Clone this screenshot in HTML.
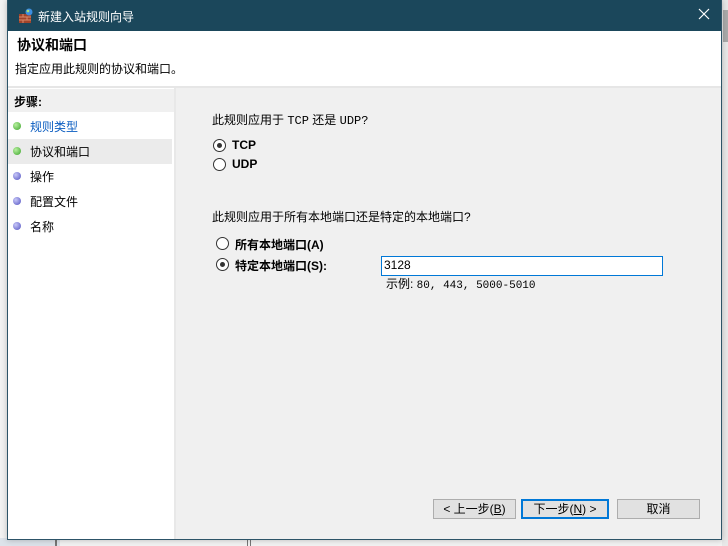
<!DOCTYPE html>
<html><head><meta charset="utf-8"><style>
*{margin:0;padding:0;box-sizing:border-box}
body{width:728px;height:546px;overflow:hidden;background:#f3f3f3;position:relative;font-family:"Liberation Sans","Noto Sans CJK SC",sans-serif;font-size:12px;color:#000}
.a{position:absolute}
.win{left:7px;top:0;width:715px;height:540px;background:#fff;border:1px solid #2d5468;border-top:none;box-shadow:0 0 6px rgba(0,0,0,.25)}
.title{left:0;top:0;width:713px;height:31px;background:#1b475b;color:#fff;font-size:12px}
.radio{width:13px;height:13px;border:1px solid #333;border-radius:50%;background:#fff}
.radio.on::after{content:"";position:absolute;left:3px;top:3px;width:5px;height:5px;border-radius:50%;background:#333}
.dot{width:8px;height:8px;border-radius:50%}
.g{background:radial-gradient(circle at 35% 35%,#b8f0a0,#3aa32a)}
.b{background:radial-gradient(circle at 35% 35%,#c8c8f8,#5050c0)}
.btn{height:20px;border:1px solid #adadad;background:#e1e1e1;text-align:center;line-height:18px;font-size:12px}
b{font-weight:bold}
</style></head><body>
<div class="a" style="left:722px;top:0;width:6px;height:546px;background:#e8e8e8"></div>
<div class="a" style="left:723px;top:10px;width:5px;height:32px;background:#aaa"></div>
<div class="a" style="left:0;top:538px;width:60px;height:8px;background:#dde3ea"></div>
<div class="a" style="left:55px;top:538px;width:2px;height:8px;background:#777"></div>
<div class="a" style="left:247px;top:538px;width:4px;height:8px;border-left:1px solid #777;border-right:1px solid #777"></div>
<div class="a win">
 <div class="a title">
  <svg class="a" style="left:10px;top:8px" width="16" height="16"><rect x="1" y="6" width="12" height="9" fill="#a0442a"/><path d="M1 9h12M1 12h12M5 6v3M9 9v3M5 12v3" stroke="#d88a6a" stroke-width="1"/><circle cx="11" cy="4" r="3.5" fill="#3c8ee0"/><circle cx="10" cy="3" r="1.3" fill="#a8e070"/></svg>
  <div class="a" style="left:30px;top:8px">新建入站规则向导</div>
  <svg class="a" style="left:690px;top:8px" width="12" height="12"><path d="M1 1L11 11M11 1L1 11" stroke="#fff" stroke-width="1.2"/></svg>
 </div>
 <div class="a" style="left:9px;top:35px;font-size:14px;font-weight:bold">协议和端口</div>
 <div class="a" style="left:7px;top:60px">指定应用此规则的协议和端口。</div>
 <div class="a" style="left:0;top:86px;width:713px;height:2px;background:#e6e6e6"></div>
 <div class="a" style="left:0;top:89px;width:166px;height:450px;background:#fff"></div>
 <div class="a" style="left:0;top:89px;width:166px;height:23px;background:#f0f0f0"></div>
 <div class="a" style="left:6px;top:93px;font-weight:bold">步骤:</div>
 <div class="a" style="left:166px;top:88px;width:2px;height:451px;background:#e8e8e8"></div>
 <div class="a" style="left:168px;top:88px;width:545px;height:451px;background:#f0f0f0"></div>
 <div class="a" style="left:0;top:139px;width:164px;height:25px;background:#ebebeb"></div>
 <div class="a dot g" style="left:5px;top:122px"></div><div class="a" style="left:22px;top:118px;color:#0a5cc0">规则类型</div>
 <div class="a dot g" style="left:5px;top:147px"></div><div class="a" style="left:22px;top:143px">协议和端口</div>
 <div class="a dot b" style="left:5px;top:172px"></div><div class="a" style="left:22px;top:168px">操作</div>
 <div class="a dot b" style="left:5px;top:197px"></div><div class="a" style="left:22px;top:193px">配置文件</div>
 <div class="a dot b" style="left:5px;top:222px"></div><div class="a" style="left:22px;top:218px">名称</div>

 <div class="a" style="left:204px;top:111px">此规则应用于 <span style="font-family:'Liberation Mono',monospace">TCP</span> 还是 <span style="font-family:'Liberation Mono',monospace">UDP?</span></div>
 <div class="a radio on" style="left:205px;top:139px"></div><div class="a" style="left:224px;top:138px"><b>TCP</b></div>
 <div class="a radio" style="left:205px;top:158px"></div><div class="a" style="left:224px;top:157px"><b>UDP</b></div>
 <div class="a" style="left:204px;top:208px">此规则应用于所有本地端口还是特定的本地端口?</div>
 <div class="a radio" style="left:208px;top:237px"></div><div class="a" style="left:227px;top:236px"><b>所有本地端口(A)</b></div>
 <div class="a radio on" style="left:208px;top:258px"></div><div class="a" style="left:227px;top:257px"><b>特定本地端口(S):</b></div>
 <div class="a" style="left:373px;top:256px;width:282px;height:20px;background:#fff;border:1px solid #0078d7;padding-left:2px;line-height:17px">3128</div>
 <div class="a" style="left:378px;top:275px">示例: <span style="font-family:'Liberation Mono',monospace;font-size:11px">80, 443, 5000-5010</span></div>

 <div class="a btn" style="left:425px;top:499px;width:83px">&lt; 上一步(<u>B</u>)</div>
 <div class="a btn" style="left:513px;top:499px;width:88px;border:2px solid #0078d7;line-height:16px">下一步(<u>N</u>) &gt;</div>
 <div class="a btn" style="left:609px;top:499px;width:83px">取消</div>
</div>
</body></html>
